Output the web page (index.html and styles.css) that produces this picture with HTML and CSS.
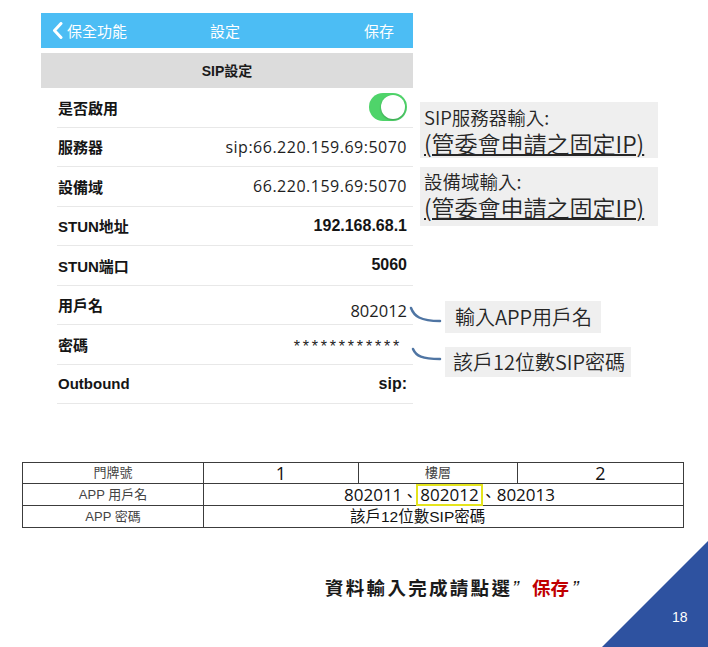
FILE: index.html
```html
<!DOCTYPE html>
<html lang="zh-Hant">
<head>
<meta charset="utf-8">
<title>SIP設定</title>
<link rel="stylesheet" href="styles.css">
</head>
<body>
<div class="slide">
  <div class="top">
    <div class="phone">
      <div class="nav">
        <div class="nav-left">
          <svg class="chev" width="11" height="17" viewBox="0 0 11 17"><path d="M9 1.5 L2.5 8.5 L9 15.5" fill="none" stroke="#fff" stroke-width="3" stroke-linecap="round" stroke-linejoin="round"/></svg>
          <span>保全功能</span>
        </div>
        <div class="nav-title">設定</div>
        <div class="nav-right">保存</div>
      </div>
      <div class="section">SIP設定</div>
      <div class="row"><span class="label">是否啟用</span><span class="toggle"><span class="knob"></span></span></div>
      <div class="row"><span class="label">服務器</span><span class="val">sip:66.220.159.69:5070</span></div>
      <div class="row"><span class="label">設備域</span><span class="val">66.220.159.69:5070</span></div>
      <div class="row"><span class="label">STUN地址</span><span class="val bold">192.168.68.1</span></div>
      <div class="row"><span class="label">STUN端口</span><span class="val bold">5060</span></div>
      <div class="row"><span class="label">用戶名</span><span class="val user">802012</span></div>
      <div class="row"><span class="label">密碼</span><span class="val pass">************</span></div>
      <div class="row"><span class="label">Outbound</span><span class="val bold">sip:</span></div>
    </div>
    <div class="notes">
      <div class="box big b1">
        <div class="l1">SIP服務器輸入:</div>
        <div class="l2">(管委會申請之固定IP)</div>
      </div>
      <div class="box big b2">
        <div class="l1">設備域輸入:</div>
        <div class="l2">(管委會申請之固定IP)</div>
      </div>
      <div class="callout c1">
        <svg class="curve" width="32" height="32" viewBox="0 0 32 32"><path d="M-2 7 C 1 15, 7 20, 27 20" fill="none" stroke="#4f75a3" stroke-width="2.5" stroke-linecap="round"/></svg>
        <div class="box small s1">輸入APP用戶名</div>
      </div>
      <div class="callout c2">
        <svg class="curve" width="32" height="30" viewBox="0 0 32 30"><path d="M0 2 C 3 9, 9 12, 27 12" fill="none" stroke="#4f75a3" stroke-width="2.5" stroke-linecap="round"/></svg>
        <div class="box small s2">該戶12位數SIP密碼</div>
      </div>
    </div>
  </div>

  <table class="grid">
    <colgroup>
      <col class="c-a"><col class="c-b"><col class="c-c"><col class="c-d">
    </colgroup>
    <tr class="r1">
      <td class="head">門牌號</td>
      <td class="num">1</td>
      <td class="head">樓層</td>
      <td class="num">2</td>
    </tr>
    <tr class="r2">
      <td class="head">APP 用戶名</td>
      <td colspan="3" class="ids"><span class="id">802011</span><span class="sep">、</span><span class="id hl">802012</span><span class="sep">、</span><span class="id">802013</span></td>
    </tr>
    <tr class="r3">
      <td class="head">APP 密碼</td>
      <td colspan="3" class="pw">該戶12位數SIP密碼</td>
    </tr>
  </table>

  <div class="footer-note"><span class="spaced">資料輸入完成請點選</span><span class="q">”</span><span class="red">保存</span><span class="q">”</span></div>

  <div class="corner"></div>
  <div class="page">18</div>
</div>
</body>
</html>
```

FILE: styles.css
```css
* { box-sizing: border-box; }
html, body { margin: 0; padding: 0; background: #fff; }
.slide {
  width: 708px;
  height: 647px;
  position: relative;
  overflow: hidden;
  background: #fff;
  font-family: "Noto Sans CJK TC", sans-serif;
  color: #1e1e1e;
}
.top {
  display: flex;
  align-items: flex-start;
  padding-top: 13px;
}
.phone {
  margin-left: 41px;
  width: 372px;
}
.nav {
  height: 35px;
  background: #4cbdf4;
  color: #fff;
  display: grid;
  grid-template-columns: 1fr auto 1fr;
  align-items: center;
  font-size: 15px;
  padding: 0 19px 0 11px;
}
.nav-left { display: flex; align-items: center; gap: 4px; }
.chev { display: block; }
.nav-title { text-align: center; padding-left: 4px; }
.nav-right { text-align: right; }
.section {
  margin-top: 5px;
  height: 35px;
  background: #dcdcdc;
  display: flex;
  align-items: center;
  justify-content: center;
  font-family: "Liberation Sans", "Noto Sans CJK TC", sans-serif;
  font-weight: bold;
  font-size: 14px;
  color: #1a1a1a;
  padding-bottom: 2px;
}
.row {
  height: 39.5px;
  margin-left: 16px;
  padding-right: 6px;
  border-bottom: 1px solid #e8e8e8;
  display: flex;
  align-items: center;
  justify-content: space-between;
}
.label {
  font-family: "Liberation Sans", "Noto Sans CJK TC", sans-serif;
  font-weight: bold;
  font-size: 15px;
  color: #151515;
  margin-left: 1px;
}
.val {
  font-family: "Open Sans", sans-serif;
  font-size: 16px;
  letter-spacing: 0.5px;
  color: #1e1e1e;
}
.val.bold {
  font-family: "Liberation Sans", sans-serif;
  font-weight: bold;
  letter-spacing: 0;
  color: #151515;
}
.val.user {
  font-size: 16.5px;
  letter-spacing: 0;
  padding-top: 12px;
}
.val.pass {
  font-family: "Liberation Sans", sans-serif;
  font-size: 16px;
  letter-spacing: 2.8px;
  margin-right: 5px;
  padding-top: 6px;
  color: #222;
}
.toggle {
  width: 38px;
  height: 28px;
  border-radius: 14px;
  background: #4fd46a;
  display: flex;
  align-items: center;
  justify-content: flex-end;
  padding: 2px;
}
.knob {
  width: 24px;
  height: 24px;
  border-radius: 50%;
  background: #fff;
  box-shadow: 0 1px 2px rgba(0,0,0,0.25);
}

.notes {
  display: flex;
  flex-direction: column;
  align-items: flex-start;
}
.box {
  background: #efefef;
  color: #262626;
  white-space: nowrap;
}
.big {
  margin-left: 7px;
  width: 238px;
  padding-left: 4px;
  font-weight: 350;
}
.b1 { margin-top: 89px; padding-top: 4px; padding-bottom: 1px; }
.b2 { margin-top: 9px; padding-top: 3px; padding-bottom: 5px; }
.l1 { font-size: 18.5px; line-height: 23px; }
.l2 {
  font-size: 23px;
  line-height: 28px;
  text-decoration: underline;
  text-decoration-thickness: 1.5px;
  text-underline-offset: 1px;
}
.callout {
  display: flex;
  align-items: flex-start;
}
.curve { display: block; overflow: visible; }
.c1 { margin-top: 75px; }
.c2 { margin-top: 14px; }
.small {
  font-size: 20px;
  font-weight: 350;
}
.s1 { line-height: 32px; padding: 0 9px 0 10px; }
.s2 { line-height: 30px; padding: 0 6px 0 8px; }

.grid {
  margin: 58px 0 0 22px;
  width: 661px;
  border-collapse: collapse;
  table-layout: fixed;
}
.c-a { width: 181px; }
.c-b { width: 155px; }
.c-c { width: 159px; }
.c-d { width: 166px; }
.grid td {
  border: 1px solid #3c3c3c;
  padding: 0;
  text-align: center;
  vertical-align: middle;
  white-space: nowrap;
}
.r1 td { height: 21px; }
.r2 td, .r3 td { height: 22px; }
.head {
  font-family: "Liberation Sans", "Noto Sans CJK TC", sans-serif;
  font-size: 13px;
  color: #444;
  line-height: 18px;
}
.num {
  font-family: "Open Sans", sans-serif;
  font-size: 18px;
  line-height: 18px;
  color: #111;
}
.grid td.ids {
  text-align: left;
  padding-left: 140px;
  font-family: "Open Sans", "Noto Sans CJK TC", sans-serif;
  font-size: 17px;
  line-height: 18px;
  color: #111;
}
.id { display: inline-block; }
.sep { display: inline-block; font-family: "Noto Sans CJK TC", sans-serif; font-size: 15px; width: 16px; }
.hl {
  outline: 2.5px solid #e4e41c;
  outline-offset: 0;
  padding: 0 2px;
}
.grid td.pw {
  text-align: left;
  padding-left: 146px;
  font-family: "Liberation Sans", "Noto Sans CJK TC", sans-serif;
  font-size: 15.5px;
  line-height: 18px;
  color: #111;
}

.footer-note {
  margin-top: 49px;
  padding-left: 325px;
  font-size: 18.5px;
  font-weight: bold;
  line-height: 20px;
  color: #1a1a1a;
  display: flex;
  align-items: baseline;
}
.spaced { letter-spacing: 2.3px; }
.q { font-family: "Liberation Sans", sans-serif; font-weight: normal; font-style: italic; font-size: 20px; }
.red { color: #c00000; margin-left: 13px; margin-right: 3px; }

.corner {
  position: absolute;
  right: 0;
  bottom: 0;
  width: 106px;
  height: 106px;
  background: #2e52a0;
  clip-path: polygon(100% 0, 100% 100%, 0 100%);
}
.page {
  position: absolute;
  left: 672px;
  top: 609px;
  font-family: "Liberation Sans", sans-serif;
  font-size: 14px;
  color: #fff;
}
```
